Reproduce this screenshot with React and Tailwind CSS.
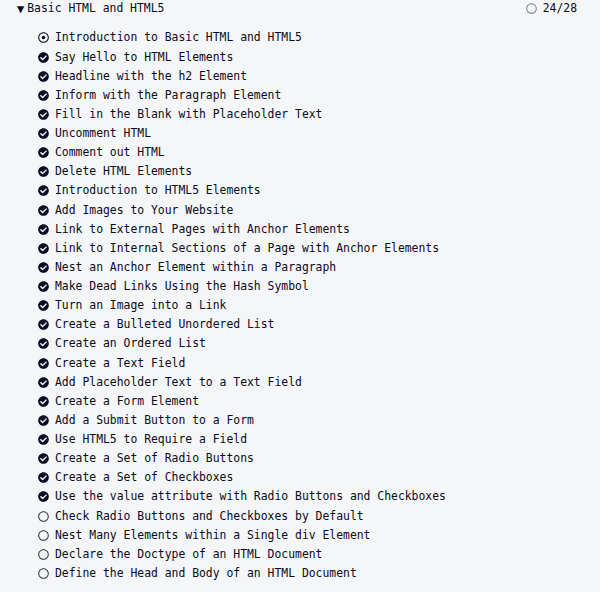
import React from "react";
import { FaCheckCircle, FaRegCircle, FaRegDotCircle } from "react-icons/fa";

const lessons = [
  ["Introduction to Basic HTML and HTML5", "current"],
  ["Say Hello to HTML Elements", "done"],
  ["Headline with the h2 Element", "done"],
  ["Inform with the Paragraph Element", "done"],
  ["Fill in the Blank with Placeholder Text", "done"],
  ["Uncomment HTML", "done"],
  ["Comment out HTML", "done"],
  ["Delete HTML Elements", "done"],
  ["Introduction to HTML5 Elements", "done"],
  ["Add Images to Your Website", "done"],
  ["Link to External Pages with Anchor Elements", "done"],
  ["Link to Internal Sections of a Page with Anchor Elements", "done"],
  ["Nest an Anchor Element within a Paragraph", "done"],
  ["Make Dead Links Using the Hash Symbol", "done"],
  ["Turn an Image into a Link", "done"],
  ["Create a Bulleted Unordered List", "done"],
  ["Create an Ordered List", "done"],
  ["Create a Text Field", "done"],
  ["Add Placeholder Text to a Text Field", "done"],
  ["Create a Form Element", "done"],
  ["Add a Submit Button to a Form", "done"],
  ["Use HTML5 to Require a Field", "done"],
  ["Create a Set of Radio Buttons", "done"],
  ["Create a Set of Checkboxes", "done"],
  ["Use the value attribute with Radio Buttons and Checkboxes", "done"],
  ["Check Radio Buttons and Checkboxes by Default", "todo"],
  ["Nest Many Elements within a Single div Element", "todo"],
  ["Declare the Doctype of an HTML Document", "todo"],
  ["Define the Head and Body of an HTML Document", "todo"],
];

const StatusIcon = ({ status }) => {
  if (status === "current") return <FaRegDotCircle className="w-[11px] h-[11px] text-[#0a0a23]" />;
  if (status === "done") return <FaCheckCircle className="w-[11px] h-[11px] text-[#0a0a23]" />;
  return <FaRegCircle className="w-[11px] h-[11px] text-[#3b3b4f]" />;
};

export default function App() {
  return (
    <div
      className="w-[600px] h-[592px] bg-[#f5f6f7] text-[#0a0a23] text-[11.4px] overflow-hidden"
      style={{ fontFamily: '"DejaVu Sans Mono", "Liberation Mono", monospace' }}
    >
      <div className="flex items-center justify-between h-[17px] pl-[17px] pr-[23px]">
        <div className="flex items-center gap-[3px]">
          <span className="text-[12px] leading-none">▼</span>
          <span>Basic HTML and HTML5</span>
        </div>
        <div className="flex items-center gap-[6px]">
          <FaRegCircle className="w-[11px] h-[11px] text-[#858591]" />
          <span>24/28</span>
        </div>
      </div>
      <ul className="pt-[11.4px] pl-[38px]">
        {lessons.map(([title, status]) => (
          <li key={title} className="flex items-center gap-[6px] h-[19.14px] whitespace-nowrap">
            <StatusIcon status={status} />
            <span>{title}</span>
          </li>
        ))}
      </ul>
    </div>
  );
}
